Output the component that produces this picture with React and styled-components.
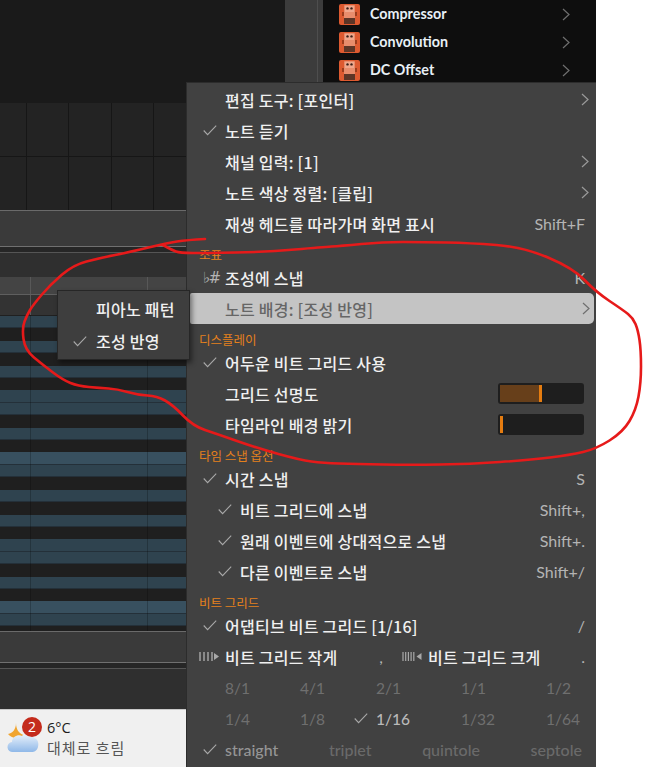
import React from 'react';
import styled, { createGlobalStyle } from 'styled-components';

const Global = createGlobalStyle`
  html, body { margin: 0; padding: 0; background: #fff; }
  body { font-family: Lato, "Noto Sans CJK KR", sans-serif; }
`;

const FONT = 'Lato, "Noto Sans CJK KR", sans-serif';
const KFONT = '"Noto Sans CJK KR", Lato, sans-serif';

const Page = styled.div`
  position: relative; width: 646px; height: 767px; overflow: hidden;
  display: flex; background: #fff; font-family: ${FONT};
`;
const Workspace = styled.div`width: 596px; height: 767px; display: flex; align-items: flex-start; background: #3c3c3c;`;
const EditorColumn = styled.div`width: 285px; flex: none; display: flex; flex-direction: column; height: 767px;`;
const SideStrip = styled.div`
  width: 38px; height: 82px; flex: none; background: #3c3c3c;
  box-shadow: inset -5px 0 0 #3c3c3c, inset -6px 0 0 #4e4e4e;
`;
const DarkPane = styled.div`height: 103px; background: #1a1a1a; flex: none;`;
const CellGrid = styled.div`
  height: 107px; flex: none; background-color: #232323;
  background-image:
    linear-gradient(#161616, #161616),
    linear-gradient(#161616, #161616), linear-gradient(#161616, #161616),
    linear-gradient(#161616, #161616), linear-gradient(#161616, #161616);
  background-size: 100% 1px, 1px 100%, 1px 100%, 1px 100%, 1px 100%;
  background-position: 0 53px, 26px 0, 68px 0, 111px 0, 153px 0;
  background-repeat: no-repeat;
`;
const ToolBar = styled.div`
  height: ${p => p.$h}px; flex: none; background: #3a3a3a; border-top: 1px solid #6a6a6a; box-sizing: border-box;
`;
const Splitter = styled.div`
  height: 7px; flex: none; background: #262626;
  border-top: 1px solid #707070; border-bottom: 1px solid #555; box-sizing: border-box;
`;
const Filler = styled.div`height: ${p => p.$h}px; flex: none; background: #2f2f2f;`;
const Timeline = styled.div`
  position: relative; height: ${p => p.$h}px; flex: none; background: ${p => p.$bg};
  border-bottom: ${p => p.$line ? '1px solid #5f5f5f' : 'none'}; box-sizing: border-box;
`;
const TimeTick = styled.span`position: absolute; top: 0; bottom: 0; left: ${p => p.$x}px; width: 1px; background: #585858;`;
const NoteRows = styled.div`
  position: relative; height: 316px; flex: none; background: #202020; padding-top: 1px; box-sizing: border-box; overflow: hidden;
`;
const NoteRow = styled.div`
  height: 12.42px;
  background: ${p => p.$kind === 'L' ? '#38505f' : p.$kind === 'B' ? '#2f434f' : '#1f1f1f'};
  box-shadow: ${p => p.$kind === 'K' ? 'none' : 'inset 0 -1px 0 #243039'};
`;
const GridLine = styled.span`position: absolute; top: 0; bottom: 0; left: ${p => p.$x}px; width: 1px; background: rgba(0,0,0,.22);`;
const Taskbar = styled.div`
  flex: none; height: 58px; background: #f0f0f0; border-top: 1px solid #c9c9c9; box-sizing: border-box;
  display: flex; align-items: center; padding-left: 7px; gap: 2px;
`;
const WeatherIcon = styled.div`position: relative; width: 38px; height: 45px; flex: none;`;
const Badge = styled.span`
  position: absolute; left: 15px; top: 1px; width: 20px; height: 20px; border-radius: 50%;
  background: #c42b1c; color: #fff; font: 400 14px/20px "Open Sans", sans-serif; text-align: center;
`;
const WeatherText = styled.div`display: flex; flex-direction: column; padding-bottom: 2px; color: #1c1c1c; font-family: "Open Sans", ${KFONT};`;
const Temp = styled.span`font-size: 14.5px; line-height: 20px;`;
const Condition = styled.span`font-size: 15px; line-height: 20px; color: #555; font-family: ${KFONT}; letter-spacing: 1px;`;

const Browser = styled.div`
  flex: 1; height: 82px; background: #0e0e0e; overflow: hidden; box-sizing: border-box; padding-left: 16px;
`;
const BrowserRow = styled.div`
  height: 28px; display: flex; align-items: center; gap: 10px; padding-right: 30px;
  color: #e8f0f6; font: 700 14.3px/26px ${FONT};
`;
const BrowserName = styled.span`flex: 1;`;

const Menu = styled.div`
  position: absolute; left: 186px; top: 82px; width: 410px; height: 685px; box-sizing: border-box;
  background: #414141; border-left: 1px solid #2c2c2c; border-top: 1px solid #2c2c2c; padding-top: 1px;
  display: flex; flex-direction: column; color: #f0f0f0;
`;
const Row = styled.div`
  height: 31px; flex: none; display: flex; align-items: center; box-sizing: border-box;
  padding-right: ${p => p.$active ? '8px' : '11px'};
  margin: ${p => p.$active ? '0 2px 0 3px' : '0'};
  padding-left: ${p => (p.$active ? 35 : 38) + (p.$indent ? 15 : 0)}px;
  position: relative;
  background: ${p => p.$active ? '#c4c4c4' : 'transparent'};
  border-radius: ${p => p.$active ? '2px 5px 5px 2px' : '0'};
  color: ${p => p.$active ? '#666' : '#f0f0f0'};
`;
const Label = styled.span`font: 500 16px ${KFONT}; flex: 1; white-space: nowrap; letter-spacing: .25px;`;
const Shortcut = styled.span`font: 400 16px ${FONT}; color: #b4b4b4;`;
const Section = styled.div`
  height: 23px; flex: none; display: flex; align-items: center; padding: 8px 0 0 12px; box-sizing: border-box;
  font: 400 12.5px ${KFONT}; color: #e5801c;
`;
const Lead = styled.span`position: absolute; left: ${p => p.$x}px; top: 0; bottom: 0; display: flex; align-items: center; color: #aaa;`;
const KeyGlyph = styled.span`font: 400 15px "DejaVu Sans", sans-serif; letter-spacing: -1.5px; color: #b4b4b4;`;
const Chevron = styled.svg`
  width: 8px; height: 13px; flex: none; margin-right: -4px; margin-left: auto;
  color: ${p => p.$dim ? '#6f6f6f' : '#9a9a9a'};
`;
const Track = styled.div`
  width: 86px; height: 21px; background: #1e1e1e; border-radius: 3px; box-sizing: border-box; padding: 2px; flex: none; margin-right: 1px;
`;
const Fill = styled.div`
  height: 100%; box-sizing: border-box; background: #673f1a; border-right: 3px solid #e57c10;
`;
const HalfRow = styled.div`display: flex; align-items: center; flex: 1; position: relative;`;
const HalfLabel = styled(Label)`flex: none;`;
const Comma = styled(Shortcut)`margin-left: auto;`;
const HalfIcon = styled.svg`width: 20px; height: 9px; flex: none; margin-right: 6px;`;
const SplitLeft = styled.div`width: 158px; flex: none; display: flex; align-items: center;`;
const SplitRight = styled.div`flex: 1; display: flex; align-items: center; padding-left: 19px;`;
const LeadIcon = styled(HalfIcon)`margin: 0;`;

const ValueRow = styled.div`
  height: 31px; flex: none; position: relative; box-sizing: border-box; padding-left: 38px;
  display: grid; grid-template-columns: 75px 76px 85px 85px auto; align-items: center;
  font: 400 15.5px ${FONT}; color: #6f6f6f;
`;
const GridValue = styled.span`color: ${p => p.$on ? '#b9b9b9' : '#6f6f6f'}; font-weight: ${p => p.$on ? 500 : 400};`;
const TupletRow = styled.div`
  height: 31px; flex: none; position: relative; box-sizing: border-box; padding: 0 14px 0 38px;
  display: flex; justify-content: space-between; align-items: center;
  font: 500 16px ${FONT}; color: #6a6a6a;
`;
const TupletOn = styled.span`color: #959595;`;

const Submenu = styled.div`
  position: absolute; left: 57px; top: 290px; width: 133px; height: 70px; box-sizing: border-box;
  background: #3e3e3e; border: 1px solid #262626; box-shadow: 2px 3px 5px rgba(0,0,0,.45);
  padding-top: 2px;
`;
const SubRow = styled.div`
  height: 32px; display: flex; align-items: center; padding-left: 38px; position: relative;
  font: 500 16px ${KFONT}; color: #f0f0f0; letter-spacing: .25px;
`;
const Annotation = styled.svg`position: absolute; left: 0; top: 0; pointer-events: none;`;

const Check = () => (
  <svg width="14" height="11" viewBox="0 0 14 11" fill="none">
    <path d="M.7 5.500 4.600 9.600 13.200 .7" stroke="#a8a8a8" strokeWidth="1.1" />
  </svg>
);
const Chev = ({ dim }) => (
  <Chevron viewBox="0 0 8 13" fill="none" $dim={dim}>
    <path d="M1 1 7 6.500 1 12" stroke="currentColor" strokeWidth="1.2" />
  </Chevron>
);
const Pedal = () => (
  <svg width="21" height="21" viewBox="0 0 21 21">
    <rect width="21" height="21" rx="2" fill="#dd5a30" />
    <rect x="5" y="1" width="11" height="19" rx="1" fill="#e88d6c" />
    <rect x="6" y="2" width="9" height="6" fill="#f0a78c" />
    <circle cx="8.500" cy="4.400" r="1.200" fill="#3a2018" />
    <circle cx="12.500" cy="4.400" r="1.200" fill="#3a2018" />
    <rect x="5" y="14" width="11" height="6" fill="#5c3526" />
    <rect x="3" y="8" width="2" height="4" fill="#9c3c1c" />
    <rect x="16" y="8" width="2" height="4" fill="#9c3c1c" />
  </svg>
);
const GridSmaller = () => (
  <LeadIcon viewBox="0 0 20 9">
    <path d="M1 0v9M5 0v9M9 0v9M13 0v9" stroke="#a8a8a8" strokeWidth="1.4" />
    <path d="M15 1l5 3.500-5 3.500z" fill="#a8a8a8" />
  </LeadIcon>
);
const GridLarger = () => (
  <HalfIcon viewBox="0 0 20 9">
    <path d="M1 0v9M3.700 0v9M6.400 0v9M9.100 0v9M11.800 0v9" stroke="#a8a8a8" strokeWidth="1.2" />
    <path d="M19.500 1l-5 3.500 5 3.500z" fill="#a8a8a8" />
  </HalfIcon>
);

const PATTERN = ['L','B','K','B','K','B','K','B','B','K','B','K'];
const notes = Array.from({ length: 26 }, (_, i) => PATTERN[(i + 1) % 12]);

const redPoints = [
  [205,239],[187,240],[167,243],[130,252],[100,258],[73,265],[50,285],[33,305],[27,315],[22,328],[25,350],[43,365],[63,380],
  [78,386],[100,388],[117,389],[138,395],[157,396],[173,405],[193,426],[217,434],[257,448],[300,460],[323,463],[356,464],
  [410,465],[470,464],[530,460],[570,455],[596,449],[623,432],[636,410],[641,383],[641,350],[638,330],[633,318],[623,310],[596,292],[573,268],
  [523,247],[470,243],[423,242],[383,242],[340,246],[323,247],[267,252],[205,253],[180,253],[172,250],[163,245],
];
const smooth = pts => {
  let d = `M${pts[0][0]} ${pts[0][1]}`;
  for (let i = 1; i < pts.length - 1; i++) {
    const mx = (pts[i][0] + pts[i + 1][0]) / 2, my = (pts[i][1] + pts[i + 1][1]) / 2;
    d += `Q${pts[i][0]} ${pts[i][1]} ${mx} ${my}`;
  }
  const l = pts[pts.length - 1];
  return `${d}L${l[0]} ${l[1]}`;
};

const Item = ({ children, check, indent, short, chev, active, glyph }) => (
  <Row $indent={indent} $active={active}>
    {check && <Lead $x={indent ? 31 : 16}><Check /></Lead>}
    {glyph && <Lead $x={16}><KeyGlyph>{glyph}</KeyGlyph></Lead>}
    <Label>{children}</Label>
    {short && <Shortcut>{short}</Shortcut>}
    {chev && <Chev dim={active} />}
  </Row>
);

export default function App() {
  return (
    <Page>
      <Global />
      <Workspace>
        <EditorColumn>
          <DarkPane />
          <CellGrid />
          <ToolBar $h={36} />
          <Splitter />
          <Filler $h={24} />
          <Timeline $h={18} $bg="#444" $line><TimeTick $x={30} /><TimeTick $x={147} /></Timeline>
          <Timeline $h={20} $bg="#333"><TimeTick $x={30} /><TimeTick $x={147} /></Timeline>
          <NoteRows>
            {notes.map((k, i) => <NoteRow key={i} $kind={k} />)}
            <GridLine $x={30} /><GridLine $x={147} />
          </NoteRows>
          <ToolBar $h={31} />
          <Splitter />
          <Filler $h={40} />
          <Taskbar>
            <WeatherIcon>
              <svg width="38" height="45" viewBox="0 0 38 45">
                <defs>
                  <linearGradient id="cl" x1="0" y1="0" x2="0" y2="1">
                    <stop offset="0" stopColor="#eef5fc" /><stop offset="1" stopColor="#8fb8e8" />
                  </linearGradient>
                </defs>
                <path d="M9 7C9 13 6 17 1 18 5 23 13 23 17 19 12 18 9 13 9 7z" fill="#f0a530" />
                <path d="M6 36a5 5 0 0 1-1-10C5 21 11 18 15 20 18 16 25 16 27 22 31 23 32 27 31 31 30 35 27 36 25 36z" fill="url(#cl)" />
              </svg>
              <Badge>2</Badge>
            </WeatherIcon>
            <WeatherText>
              <Temp>6°C</Temp>
              <Condition>대체로 흐림</Condition>
            </WeatherText>
          </Taskbar>
        </EditorColumn>
        <SideStrip />
        <Browser>
          {['Compressor', 'Convolution', 'DC Offset'].map(n => (
            <BrowserRow key={n}>
              <Pedal />
              <BrowserName>{n}</BrowserName>
              <Chev dim />
            </BrowserRow>
          ))}
        </Browser>
      </Workspace>

      <Menu>
        <Item chev>편집 도구: [포인터]</Item>
        <Item check>노트 듣기</Item>
        <Item chev>채널 입력: [1]</Item>
        <Item chev>노트 색상 정렬: [클립]</Item>
        <Item short="Shift+F">재생 헤드를 따라가며 화면 표시</Item>
        <Section>조표</Section>
        <Item glyph="♭#" short="K">조성에 스냅</Item>
        <Item active chev>노트 배경: [조성 반영]</Item>
        <Section>디스플레이</Section>
        <Item check>어두운 비트 그리드 사용</Item>
        <Row><Label>그리드 선명도</Label><Track><Fill style={{ width: '51%' }} /></Track></Row>
        <Row><Label>타임라인 배경 밝기</Label><Track><Fill style={{ width: '4%' }} /></Track></Row>
        <Section>타임 스냅 옵션</Section>
        <Item check short="S">시간 스냅</Item>
        <Item check indent short="Shift+,">비트 그리드에 스냅</Item>
        <Item check indent short="Shift+.">원래 이벤트에 상대적으로 스냅</Item>
        <Item check indent short="Shift+/">다른 이벤트로 스냅</Item>
        <Section>비트 그리드</Section>
        <Item check short="/">어댑티브 비트 그리드 [1/16]</Item>
        <Row>
          <Lead $x={12}><GridSmaller /></Lead>
          <HalfRow>
            <SplitLeft><HalfLabel>비트 그리드 작게</HalfLabel><Comma>,</Comma></SplitLeft>
            <SplitRight><GridLarger /><HalfLabel>비트 그리드 크게</HalfLabel><Comma>.</Comma></SplitRight>
          </HalfRow>
        </Row>
        <ValueRow>
          <GridValue>8/1</GridValue><GridValue>4/1</GridValue><GridValue>2/1</GridValue><GridValue>1/1</GridValue><GridValue>1/2</GridValue>
        </ValueRow>
        <ValueRow>
          <GridValue>1/4</GridValue><GridValue>1/8</GridValue>
          <GridValue $on>1/16</GridValue><GridValue>1/32</GridValue><GridValue>1/64</GridValue>
          <Lead $x={167}><Check /></Lead>
        </ValueRow>
        <TupletRow>
          <Lead $x={16}><Check /></Lead>
          <TupletOn>straight</TupletOn><span>triplet</span><span>quintole</span><span>septole</span>
        </TupletRow>
      </Menu>

      <Submenu>
        <SubRow>피아노 패턴</SubRow>
        <SubRow><Lead $x={15}><Check /></Lead>조성 반영</SubRow>
      </Submenu>

      <Annotation width="646" height="767" viewBox="0 0 646 767" fill="none">
        <path d={smooth(redPoints)} stroke="#e61a1a" strokeWidth="2.6" strokeLinecap="round" strokeLinejoin="round" />
      </Annotation>
    </Page>
  );
}
